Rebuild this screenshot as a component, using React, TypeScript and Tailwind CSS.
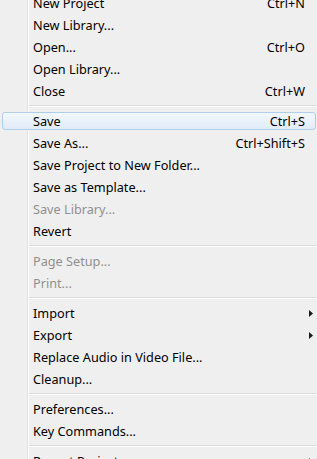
import React from "react";

type Item =
  | { type: "sep" }
  | { type: "item"; label: string; shortcut?: string; disabled?: boolean; submenu?: boolean; active?: boolean };

const items: Item[] = [
  { type: "item", label: "New Project", shortcut: "Ctrl+N" },
  { type: "item", label: "New Library..." },
  { type: "item", label: "Open...", shortcut: "Ctrl+O" },
  { type: "item", label: "Open Library..." },
  { type: "item", label: "Close", shortcut: "Ctrl+W" },
  { type: "sep" },
  { type: "item", label: "Save", shortcut: "Ctrl+S", active: true },
  { type: "item", label: "Save As...", shortcut: "Ctrl+Shift+S" },
  { type: "item", label: "Save Project to New Folder..." },
  { type: "item", label: "Save as Template..." },
  { type: "item", label: "Save Library...", disabled: true },
  { type: "item", label: "Revert" },
  { type: "sep" },
  { type: "item", label: "Page Setup...", disabled: true },
  { type: "item", label: "Print...", disabled: true },
  { type: "sep" },
  { type: "item", label: "Import", submenu: true },
  { type: "item", label: "Export", submenu: true },
  { type: "item", label: "Replace Audio in Video File..." },
  { type: "item", label: "Cleanup..." },
  { type: "sep" },
  { type: "item", label: "Preferences..." },
  { type: "item", label: "Key Commands..." },
  { type: "sep" },
  { type: "item", label: "Recent Projects", submenu: true },
];

function Arrow() {
  return (
    <svg width="4" height="7" viewBox="0 0 4 7" className="block">
      <path d="M0 0 L4 3.5 L0 7 Z" fill="#1a1a1a" />
    </svg>
  );
}

export default function App() {
  return (
    <div
      className="w-[317px] h-[459px] overflow-hidden bg-[#f0eff0] relative"
      style={{ fontFamily: '"Noto Sans", "Open Sans", sans-serif' }}
    >
      <div className="absolute left-[27px] top-0 bottom-0 w-[1px] bg-[#e2e1e2]" />
      <div className="absolute left-[28px] top-0 bottom-0 w-[1px] bg-[#ffffff]" />
      <div className="flex flex-col -mt-[8px] relative">
        {items.map((it, i) => {
          if (it.type === "sep") {
            return (
              <div key={i} className="h-[8px] flex flex-col justify-center pl-[29px]">
                <div className="h-[1px] bg-[#dcdbdc]" />
                <div className="h-[1px] bg-[#ffffff]" />
              </div>
            );
          }
          return (
            <div key={i} className="h-[22px] relative flex items-center">
              {it.active && (
                <div className="absolute left-[2px] right-[1px] top-[2px] bottom-[2px] rounded-[3px] border border-[#b0cdec] bg-gradient-to-b from-[#f2f7fd] to-[#e1ebf8]" />
              )}
              <div
                className={`relative flex-1 flex items-center pl-[33px] pr-[12px] pt-[1px] text-[12.7px] leading-none ${
                  it.disabled ? "text-[#8f8f8f]" : "text-[#000000]"
                }`}
              >
                <span className="flex-1 whitespace-nowrap">{it.label}</span>
                {it.shortcut && <span className="whitespace-nowrap">{it.shortcut}</span>}
                {it.submenu && (
                  <span className="mr-[-8px]">
                    <Arrow />
                  </span>
                )}
              </div>
            </div>
          );
        })}
      </div>
    </div>
  );
}
